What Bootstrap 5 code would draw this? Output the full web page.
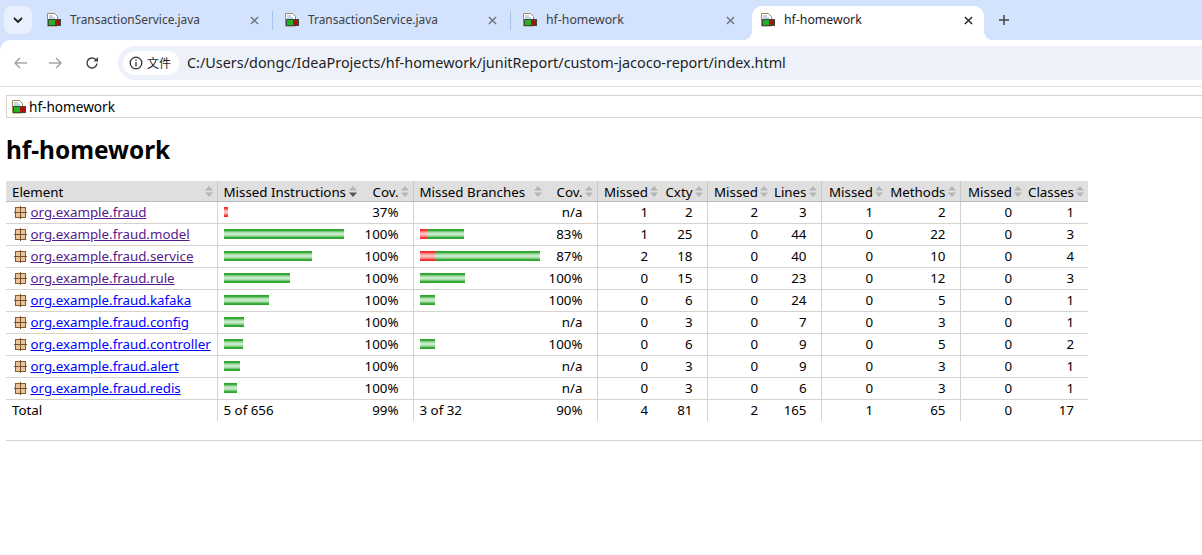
<!DOCTYPE html>
<html lang="en">
<head>
<meta charset="UTF-8">
<title>hf-homework</title>
<link href="https://cdn.jsdelivr.net/npm/bootstrap@5.3.0/dist/css/bootstrap.min.css" rel="stylesheet">
<style>
body { background: #fff; color: #000; font-family: "Noto Sans", sans-serif; font-size: 13px; overflow: hidden; }
.browser-top { background: #d3e3fd; }
.tabstrip { height: 40px; padding-left: 4px; }
.tabs-menu { width: 28px; height: 28px; margin-top: 6px; margin-right: 3px; border-radius: 8px; background: #e9f0fd; }
.tab-item { height: 34px; margin-top: 6px; width: 237px; padding: 0 13px 6px 12px; color: #3c4043; font-size: 12.3px; position: relative; }
.tab-item .page-ico { margin-right: 9px; }
.tab-item span { flex: 1; }
.tab-item .java-title { font-size: 11.9px; }
.tab-item.tab-on { background: #fff; border-radius: 10px 10px 0 0; color: #202124; width: 232px; margin-left: 4px; padding: 0 11px 6px 9px; }
.tab-on::before, .tab-on::after { content: ""; position: absolute; bottom: 0; width: 8px; height: 8px; }
.tab-on::before { left: -8px; background: radial-gradient(circle at 0 0, #d3e3fd 7.5px, #fff 8px); }
.tab-on::after { right: -8px; background: radial-gradient(circle at 100% 0, #d3e3fd 7.5px, #fff 8px); }
.tab-sep { width: 1px; height: 19px; margin-top: 11px; background: #a8c3ee; }
.tab-add { margin-left: 15px; margin-top: 6px; height: 28px; }
.toolbar { height: 47px; padding: 6px 0 6px 2px; background: #fff; border-bottom: 1px solid #e3e3e3; border-top-left-radius: 10px; }
.nav-ico { width: 36px; }
.omnibox { flex: 1; height: 34px; margin-left: 8px; background: #edf2fa; border-radius: 17px 0 0 17px; padding-left: 5px; font-size: 14.4px; color: #1f1f1f; }
.chip { height: 24px; background: #fff; border-radius: 12px; padding: 0 8px 0 6px; margin-right: 8px; font-size: 12px; gap: 4px; font-family: "Noto Sans CJK SC", sans-serif; }
.crumb { margin: 8px 0 0 6px; height: 23px; border: 1px solid #d6d3ce; border-right: 0; padding: 1px 0 0 5px; font-size: 13.6px; gap: 3px; }
.page-title { font-size: 24.4px; font-weight: 700; margin: 17px 0 16px 6px; line-height: 30px; }
.report { width: 1082px; margin-left: 6px; table-layout: fixed; border-collapse: collapse; font-size: 13.33px; line-height: 16px; }
.report th { background: #dfdfdf; font-weight: 400; height: 20px; padding: 2px 0 0 6px; border-bottom: 1px solid #bbb; white-space: nowrap; position: relative; }
.report td { height: 22px; padding: 2px 0 2px 6px; border-bottom: 1px solid #d6d3ce; white-space: nowrap; }
.report tfoot td { border-bottom: 0; }
.report .ra { text-align: right; padding-right: 14px; padding-left: 0; }
.report th.ra { padding-right: 14px; }
.report .edge { border-left: 1px solid #d6d3ce; }
.report th.edge { border-left-color: #c8c8c8; }
.report a { color: #00f; }
.report a.seen { color: #551a8b; }
.sorter { position: absolute; right: 4px; top: 5px; width: 8px; height: 11px; }
.w-el { width: 211px; } .w-bar1 { width: 144px; } .w-cov1 { width: 52px; } .w-bar2 { width: 133px; } .w-cov2 { width: 51px; }
.w-m1 { width: 65px; } .w-c { width: 45px; } .w-m2 { width: 65px; } .w-l { width: 49px; } .w-m3 { width: 66px; } .w-me { width: 73px; } .w-m4 { width: 66px; } .w-cl { width: 62px; }
.pkg-cell { padding-left: 8px !important; }
.pkg-cell svg { vertical-align: -2px; }
.bar-wrap { height: 10px; }
.seg { height: 10px; display: block; }
.seg-g { background: linear-gradient(#2aa52a 0, #2aa52a 12%, #a5dca5 32%, #d4eed4 50%, #a5dca5 68%, #2aa52a 88%, #2aa52a 100%); }
.seg-r { background: linear-gradient(#f02c2c 0, #f02c2c 12%, #fb9c9c 32%, #fdcccc 50%, #fb9c9c 68%, #f02c2c 88%, #f02c2c 100%); }
.foot-rule { margin: 19px 0 0 6px; border: 0; border-top: 1px solid #d6d3ce; opacity: 1; }
</style>
</head>
<body>
<svg width="0" height="0" class="position-absolute">
  <symbol id="report-ico" viewBox="0 0 14 14">
    <path d="M.5.500h7l3 3v9.500h-10z" fill="#fff" stroke="#a08a50"/>
    <path d="M2 3h4M2 5h6" stroke="#8ba5d8"/>
    <rect x="1" y="6" width="13" height="7" fill="#3c4a3c"/>
    <rect x="2" y="7" width="6" height="5" fill="#22b322"/>
    <rect x="8" y="7" width="5" height="5" fill="#a81212"/>
  </symbol>
  <symbol id="pkg-ico" viewBox="0 0 13 13">
    <rect x="1.500" y="1.500" width="10" height="10" fill="#e6c49c" stroke="#8a5a2b"/>
    <path d="M6.500 0v13M0 6.500h13" stroke="#7a4f25"/>
  </symbol>
  <symbol id="sort-ico" viewBox="0 0 8 11">
    <path d="M4 0l4 4.500H0zM4 11L0 6.500h8z" fill="#b5b5b5"/>
  </symbol>
  <symbol id="sort-down" viewBox="0 0 8 11">
    <path d="M4 0l4 4.500H0z" fill="#b5b5b5"/>
    <path d="M4 11L0 6.500h8z" fill="#555"/>
  </symbol>
  <symbol id="close-ico" viewBox="0 0 10 10">
    <path d="M1 1l8 8M9 1l-8 8" stroke="currentColor" stroke-width="1.500" fill="none"/>
  </symbol>
</svg>

<div class="browser-top">
<div class="tabstrip d-flex">
  <div class="tabs-menu d-flex align-items-center justify-content-center">
    <svg width="10" height="6" viewBox="0 0 10 6"><path d="M1 1l4 4 4-4" stroke="#1f1f1f" stroke-width="1.800" fill="none"/></svg>
  </div>
  <div class="tab-item d-flex align-items-center">
    <svg class="page-ico" width="14" height="14"><use href="#report-ico"/></svg>
    <span class="java-title">TransactionService.java</span>
    <svg width="9" height="9" class="text-secondary"><use href="#close-ico"/></svg>
  </div>
  <div class="tab-sep"></div>
  <div class="tab-item d-flex align-items-center">
    <svg class="page-ico" width="14" height="14"><use href="#report-ico"/></svg>
    <span class="java-title">TransactionService.java</span>
    <svg width="9" height="9" class="text-secondary"><use href="#close-ico"/></svg>
  </div>
  <div class="tab-sep"></div>
  <div class="tab-item d-flex align-items-center">
    <svg class="page-ico" width="14" height="14"><use href="#report-ico"/></svg>
    <span>hf-homework</span>
    <svg width="9" height="9" class="text-secondary"><use href="#close-ico"/></svg>
  </div>
  <div class="tab-item tab-on d-flex align-items-center">
    <svg class="page-ico" width="14" height="14"><use href="#report-ico"/></svg>
    <span>hf-homework</span>
    <svg width="9" height="9"><use href="#close-ico"/></svg>
  </div>
  <div class="tab-add d-flex align-items-center">
    <svg width="10" height="10" viewBox="0 0 10 10"><path d="M5 0v10M0 5h10" stroke="#444" stroke-width="1.500"/></svg>
  </div>
</div>

<div class="toolbar d-flex align-items-center">
  <div class="nav-ico d-flex justify-content-center">
    <svg width="14" height="14" viewBox="0 0 14 14"><path d="M14 7H2M7 2L2 7l5 5" stroke="#a4a6a8" stroke-width="1.500" fill="none"/></svg>
  </div>
  <div class="nav-ico d-flex justify-content-center">
    <svg width="14" height="14" viewBox="0 0 14 14"><path d="M0 7h12M7 2l5 5-5 5" stroke="#a4a6a8" stroke-width="1.500" fill="none"/></svg>
  </div>
  <div class="nav-ico d-flex justify-content-center">
    <svg width="14" height="14" viewBox="0 0 14 14"><path d="M12 7.500A5 5 0 1 1 10.500 3.400L12.500 5" stroke="#444" stroke-width="1.500" fill="none"/><path d="M13 1v4.500H8.500z" fill="#444"/></svg>
  </div>
  <div class="omnibox d-flex align-items-center">
    <div class="chip d-flex align-items-center">
      <svg width="14" height="14" viewBox="0 0 14 14"><circle cx="7" cy="7" r="5.800" stroke="#333" stroke-width="1.300" fill="none"/><path d="M7 6v4.200M7 3.500v1.300" stroke="#333" stroke-width="1.300"/></svg>
      文件
    </div>
    C:/Users/dongc/IdeaProjects/hf-homework/junitReport/custom-jacoco-report/index.html
  </div>
</div>
</div>

<div class="crumb d-flex align-items-center">
  <svg width="14" height="14"><use href="#report-ico"/></svg>
  hf-homework
</div>

<h1 class="page-title">hf-homework</h1>

<table class="report">
  <colgroup>
    <col class="w-el"><col class="w-bar1"><col class="w-cov1"><col class="w-bar2"><col class="w-cov2">
    <col class="w-m1"><col class="w-c"><col class="w-m2"><col class="w-l"><col class="w-m3"><col class="w-me"><col class="w-m4"><col class="w-cl">
  </colgroup>
  <thead id="report-head"></thead>
  <tbody id="report-body"></tbody>
  <tfoot id="report-foot"></tfoot>
</table>

<hr class="foot-rule">

<script>
const headers = ['Element', 'Missed Instructions', 'Cov.', 'Missed Branches', 'Cov.', 'Missed', 'Cxty', 'Missed', 'Lines', 'Missed', 'Methods', 'Missed', 'Classes'];
const edgeCols = [1, 3, 5, 7, 9, 11];
const rows = [
  ['org.example.fraud', [4, 0], '37%', null, 'n/a', 1, 2, 2, 3, 1, 2, 0, 1, true],
  ['org.example.fraud.model', [0, 120], '100%', [7, 37], '83%', 1, 25, 0, 44, 0, 22, 0, 3, true],
  ['org.example.fraud.service', [0, 88], '100%', [15, 105], '87%', 2, 18, 0, 40, 0, 10, 0, 4, true],
  ['org.example.fraud.rule', [0, 66], '100%', [0, 45], '100%', 0, 15, 0, 23, 0, 12, 0, 3, true],
  ['org.example.fraud.kafaka', [0, 45], '100%', [0, 15], '100%', 0, 6, 0, 24, 0, 5, 0, 1, false],
  ['org.example.fraud.config', [0, 20], '100%', null, 'n/a', 0, 3, 0, 7, 0, 3, 0, 1, false],
  ['org.example.fraud.controller', [0, 19], '100%', [0, 15], '100%', 0, 6, 0, 9, 0, 5, 0, 2, false],
  ['org.example.fraud.alert', [0, 16], '100%', null, 'n/a', 0, 3, 0, 9, 0, 3, 0, 1, false],
  ['org.example.fraud.redis', [0, 13], '100%', null, 'n/a', 0, 3, 0, 6, 0, 3, 0, 1, false]
];
const totals = ['Total', '5 of 656', '99%', '3 of 32', '90%', 4, 81, 2, 165, 1, 65, 0, 17];

function cellClass(i) {
  const cls = [];
  if (edgeCols.includes(i)) cls.push('edge');
  if (i === 2 || i >= 4) cls.push('ra');
  return cls.join(' ');
}

function barHtml(bar) {
  if (!bar) return '';
  let html = '<div class="bar-wrap d-flex">';
  if (bar[0]) html += `<i class="seg seg-r" style="width:${bar[0]}px"></i>`;
  if (bar[1]) html += `<i class="seg seg-g" style="width:${bar[1]}px"></i>`;
  return html + '</div>';
}

document.getElementById('report-head').innerHTML = '<tr>' + headers.map((h, i) => {
  const ico = i === 1 ? 'sort-down' : 'sort-ico';
  return `<th class="${cellClass(i)}">${h}<svg class="sorter"><use href="#${ico}"/></svg></th>`;
}).join('') + '</tr>';

document.getElementById('report-body').innerHTML = rows.map(r => {
  const seen = r[13] ? 'seen' : '';
  let html = `<tr><td class="pkg-cell"><svg width="13" height="13"><use href="#pkg-ico"/></svg> <a class="${seen}" href="#">${r[0]}</a></td>`;
  for (let i = 1; i < 13; i++) {
    const val = (i === 1 || i === 3) ? barHtml(r[i]) : r[i];
    html += `<td class="${cellClass(i)}">${val}</td>`;
  }
  return html + '</tr>';
}).join('');

document.getElementById('report-foot').innerHTML = '<tr>' + totals.map((t, i) => `<td class="${cellClass(i)}">${t}</td>`).join('') + '</tr>';
</script>
<script src="https://cdn.jsdelivr.net/npm/bootstrap@5.3.0/dist/js/bootstrap.bundle.min.js"></script>
</body>
</html>
